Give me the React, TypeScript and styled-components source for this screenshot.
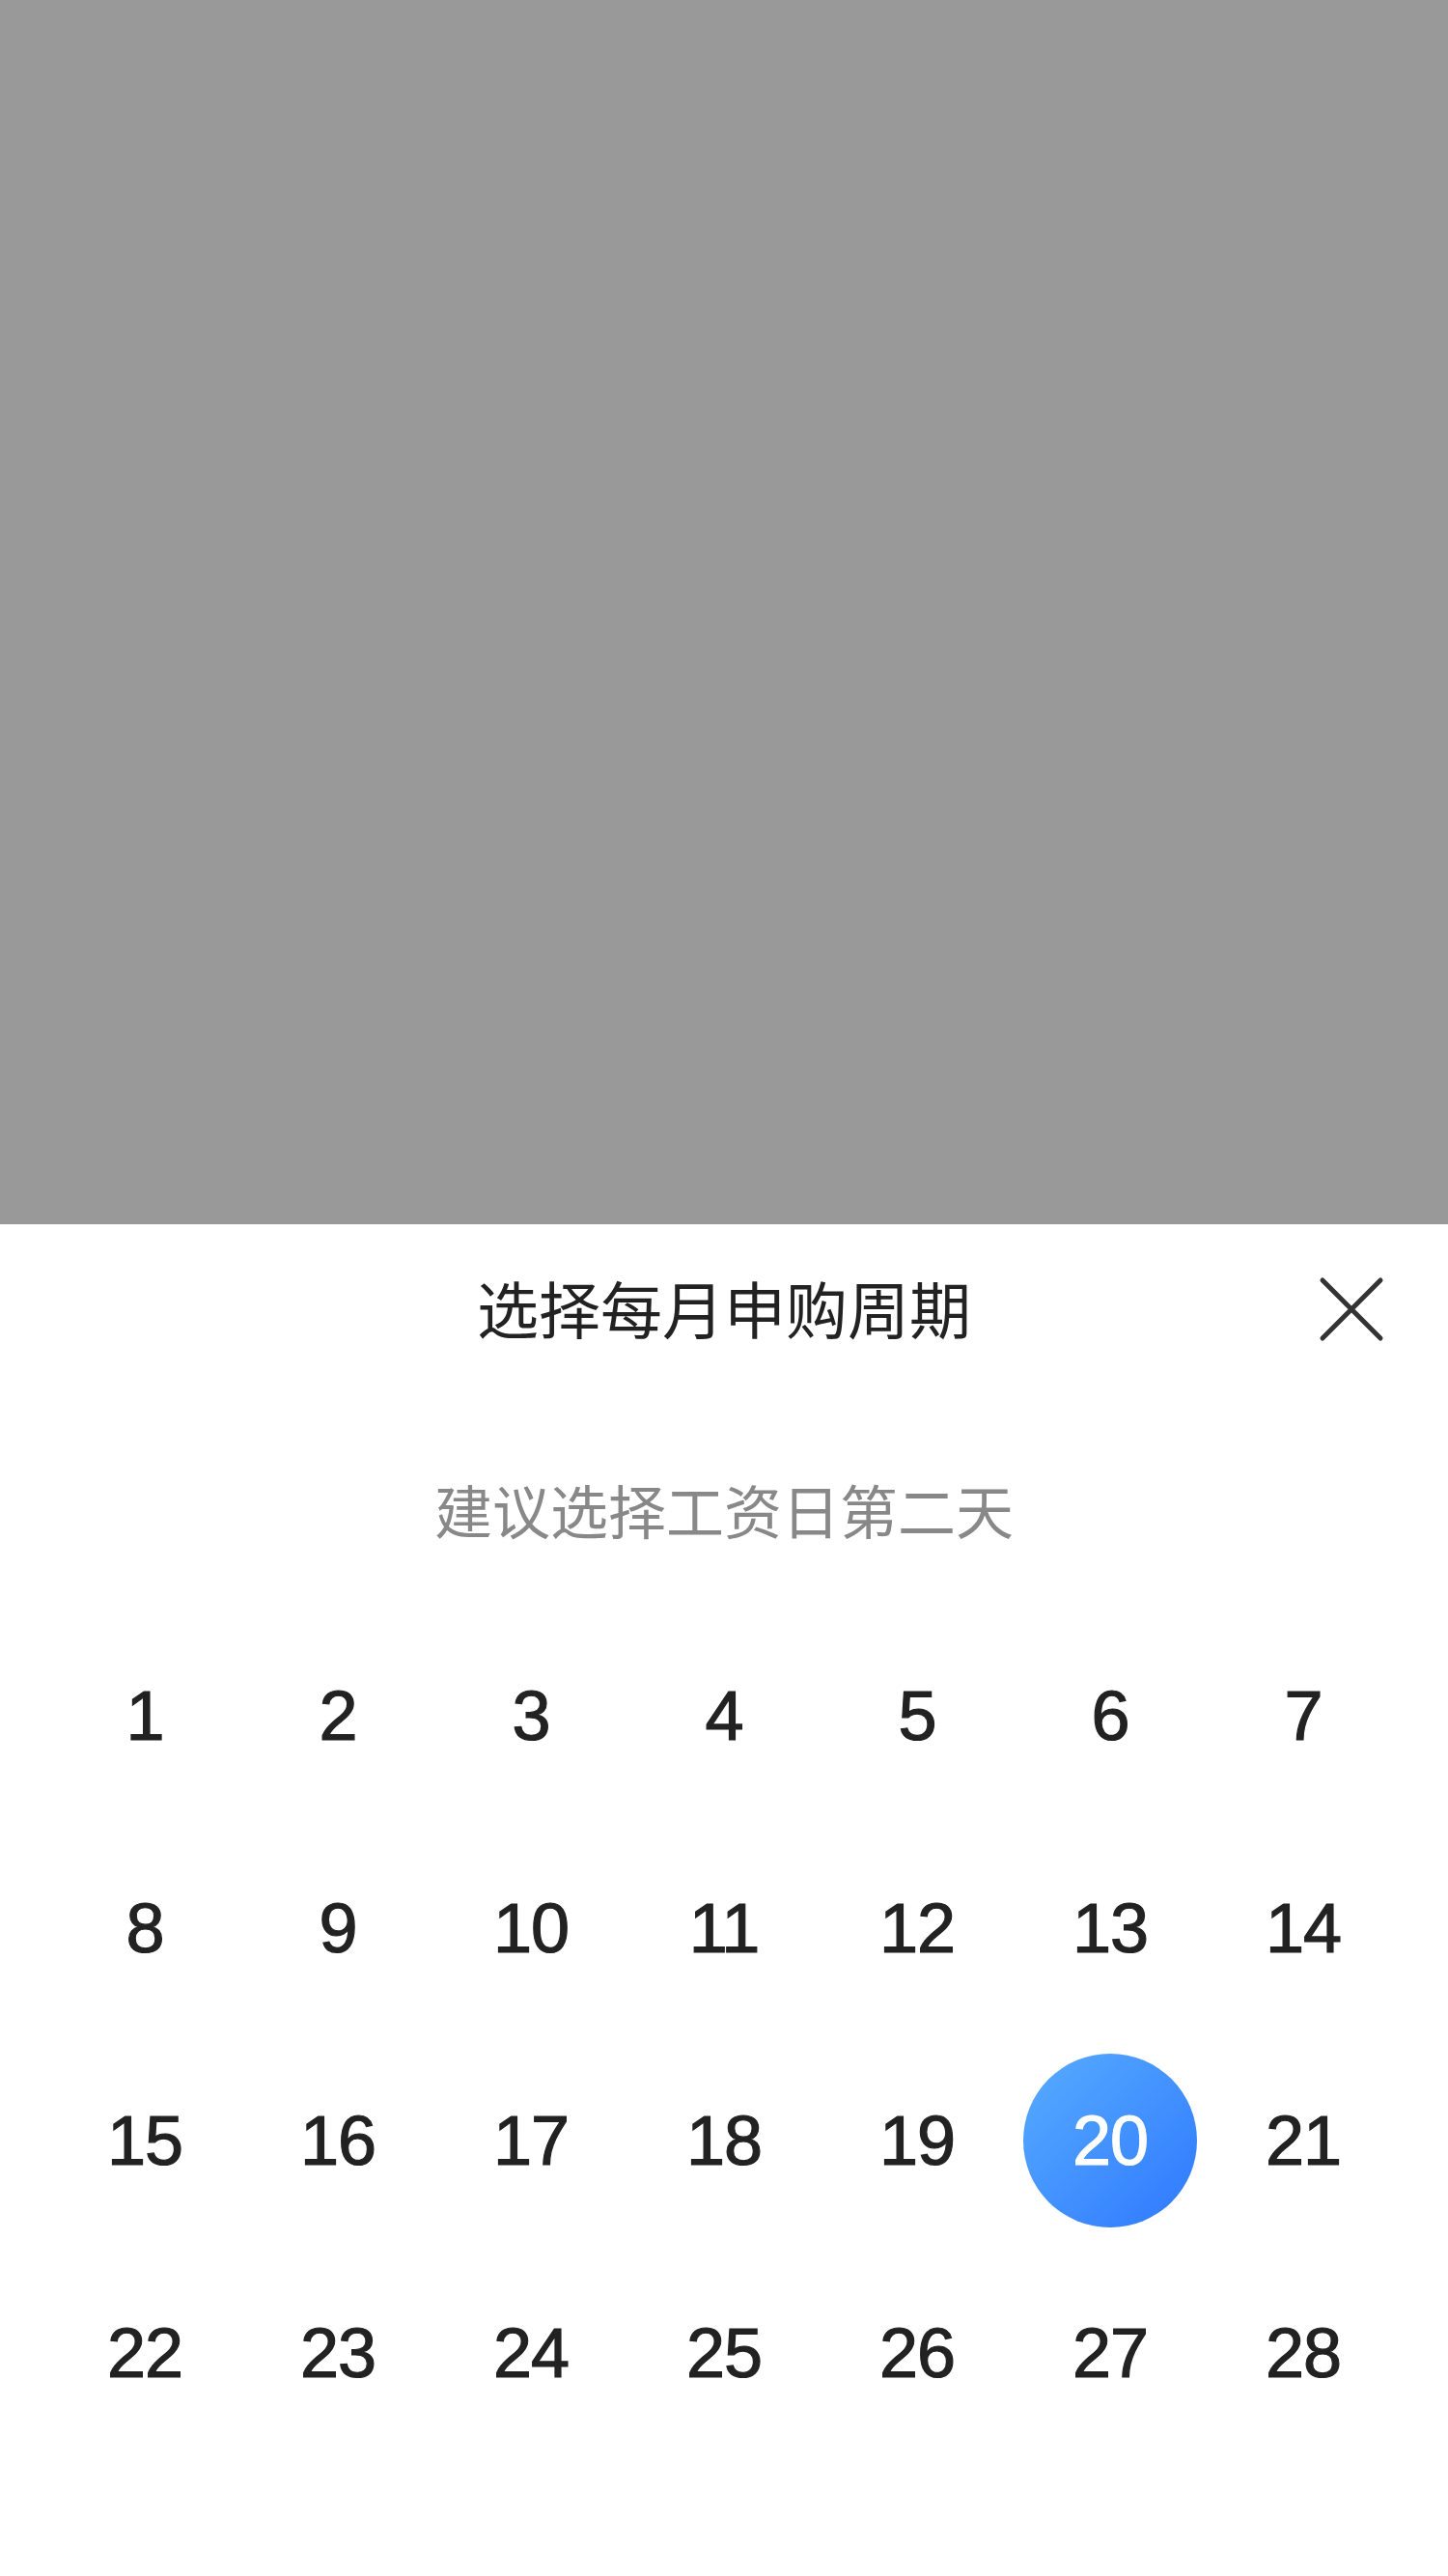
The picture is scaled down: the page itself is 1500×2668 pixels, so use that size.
import React from "react";
import styled, { createGlobalStyle } from "styled-components";

const GlobalStyle = createGlobalStyle`
  html, body {
    margin: 0;
    padding: 0;
    background: #ffffff;
  }
  body {
    font-family: "Liberation Sans", "Noto Sans CJK SC", sans-serif;
    -webkit-font-smoothing: antialiased;
  }
  * { box-sizing: border-box; }
`;

const Page = styled.div`
  width: 1500px;
  height: 2668px;
  display: flex;
  flex-direction: column;
  overflow: hidden;
`;

const Mask = styled.div`
  height: 1268px;
  flex: none;
  background: #999999;
`;

const Sheet = styled.div`
  flex: 1;
  background: #ffffff;
  display: flex;
  flex-direction: column;
`;

const Header = styled.div`
  height: 176px;
  display: grid;
  grid-template-columns: 1fr auto 1fr;
  align-items: center;
`;

const Title = styled.h2`
  grid-column: 2;
  margin: 0 0 6px;
  font-family: "Noto Sans CJK SC", sans-serif;
  font-weight: 400;
  font-size: 64px;
  line-height: 1;
  color: #222222;
`;

const CloseButton = styled.button`
  grid-column: 3;
  justify-self: end;
  margin-right: 66px;
  width: 68px;
  height: 68px;
  padding: 0;
  border: 0;
  background: transparent;
  display: flex;
  align-items: center;
  justify-content: center;
  cursor: pointer;
`;

const Hint = styled.p`
  margin: 77px 0 0;
  text-align: center;
  font-family: "Noto Sans CJK SC", sans-serif;
  font-size: 60px;
  line-height: 84px;
  color: #888888;
`;

const DayGrid = styled.div`
  margin-top: 62px;
  padding: 0 50px;
  display: grid;
  grid-template-columns: repeat(7, 200px);
  grid-auto-rows: 220px;
`;

const DayCell = styled.div`
  display: flex;
  align-items: center;
  justify-content: center;
`;

const Day = styled.span<{ $active?: boolean }>`
  width: 180px;
  height: 180px;
  border-radius: 50%;
  display: flex;
  align-items: center;
  justify-content: center;
  font-family: "Liberation Sans", Arial, sans-serif;
  font-size: 72px;
  line-height: 1;
  letter-spacing: -1px;
  -webkit-text-stroke: 1.2px currentColor;
  color: ${(p) => (p.$active ? "#ffffff" : "#222222")};
  background: ${(p) =>
    p.$active ? "linear-gradient(135deg, #58acff 0%, #2e78ff 100%)" : "transparent"};
`;

const CloseIcon = () => (
  <svg width="68" height="68" viewBox="0 0 68 68" fill="none">
    <path
      d="M4 4 L64 64 M64 4 L4 64"
      stroke="#333333"
      strokeWidth="5"
      strokeLinecap="round"
    />
  </svg>
);

const days = Array.from({ length: 28 }, (_, i) => i + 1);

export default function App() {
  const selected = 20;
  return (
    <>
      <GlobalStyle />
      <Page>
        <Mask />
        <Sheet>
          <Header>
            <Title>选择每月申购周期</Title>
            <CloseButton aria-label="关闭">
              <CloseIcon />
            </CloseButton>
          </Header>
          <Hint>建议选择工资日第二天</Hint>
          <DayGrid>
            {days.map((d) => (
              <DayCell key={d}>
                <Day $active={d === selected}>{d}</Day>
              </DayCell>
            ))}
          </DayGrid>
        </Sheet>
      </Page>
    </>
  );
}
